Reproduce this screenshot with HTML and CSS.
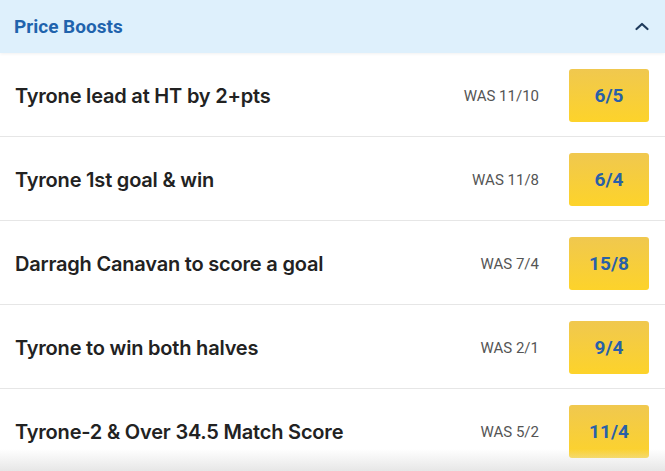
FILE: index.html
```html
<!DOCTYPE html>
<html>
<head>
<meta charset="utf-8">
<link rel="stylesheet" href="styles.css">
</head>
<body>
<div class="panel">
  <div class="header">
    <span class="title">Price Boosts</span>
    <svg class="chev" width="16" height="10" viewBox="0 0 16 10"><path d="M2.5 8 L8 3 L13.5 8" fill="none" stroke="#1f3b5c" stroke-width="2.2" stroke-linecap="round" stroke-linejoin="round"/></svg>
  </div>
  <div class="row"><span class="name">Tyrone lead at HT by 2+pts</span><span class="was">WAS 11/10</span><span class="odds">6/5</span></div>
  <div class="row"><span class="name">Tyrone 1st goal &amp; win</span><span class="was">WAS 11/8</span><span class="odds">6/4</span></div>
  <div class="row"><span class="name">Darragh Canavan to score a goal</span><span class="was">WAS 7/4</span><span class="odds">15/8</span></div>
  <div class="row"><span class="name">Tyrone to win both halves</span><span class="was">WAS 2/1</span><span class="odds">9/4</span></div>
  <div class="row last"><span class="name">Tyrone-2 &amp; Over 34.5 Match Score</span><span class="was">WAS 5/2</span><span class="odds">11/4</span></div>
</div>
<div class="fade"></div>
</body>
</html>
```
FILE: styles.css
```css
html, body { margin: 0; padding: 0; background: #fff; }
body { width: 665px; height: 471px; overflow: hidden; position: relative; }
.panel { display: flex; flex-direction: column; }
.header {
  height: 53px; background: #def0fc; display: flex; align-items: center;
  justify-content: space-between; padding: 0 15px 0 14px;
  box-shadow: 0 1px 3px rgba(0,0,0,0.06); position: relative; z-index: 1;
}
.title { font-family: Roboto, sans-serif; font-weight: 700; font-size: 19px; color: #1f63ad; letter-spacing: 0; }
.chev { margin-top: -1px; }
.row {
  height: 83px; border-bottom: 1px solid #e6e6e6; display: flex; align-items: center;
  padding: 2px 16px 0 15px; box-sizing: content-box;
}
.row { height: 81px; }
.row.last { border-bottom: none; }
.name { flex: 1; font-family: Inter, sans-serif; font-weight: 600; font-size: 20px; color: #222; letter-spacing: -0.2px; }
.was { font-family: Roboto, sans-serif; font-size: 15px; color: #555; margin-right: 30px; }
.odds {
  width: 80px; height: 53px; border-radius: 3px; display: flex; align-items: center; justify-content: center;
  background: linear-gradient(#f0c84f, #fdd32a); font-family: Roboto, sans-serif; font-weight: 700; font-size: 19px; color: #2960a8;
}
.fade { position: absolute; left: 0; right: 0; bottom: 0; height: 22px; background: linear-gradient(rgba(235,235,235,0), rgba(228,228,228,0.9)); pointer-events: none; }
```
